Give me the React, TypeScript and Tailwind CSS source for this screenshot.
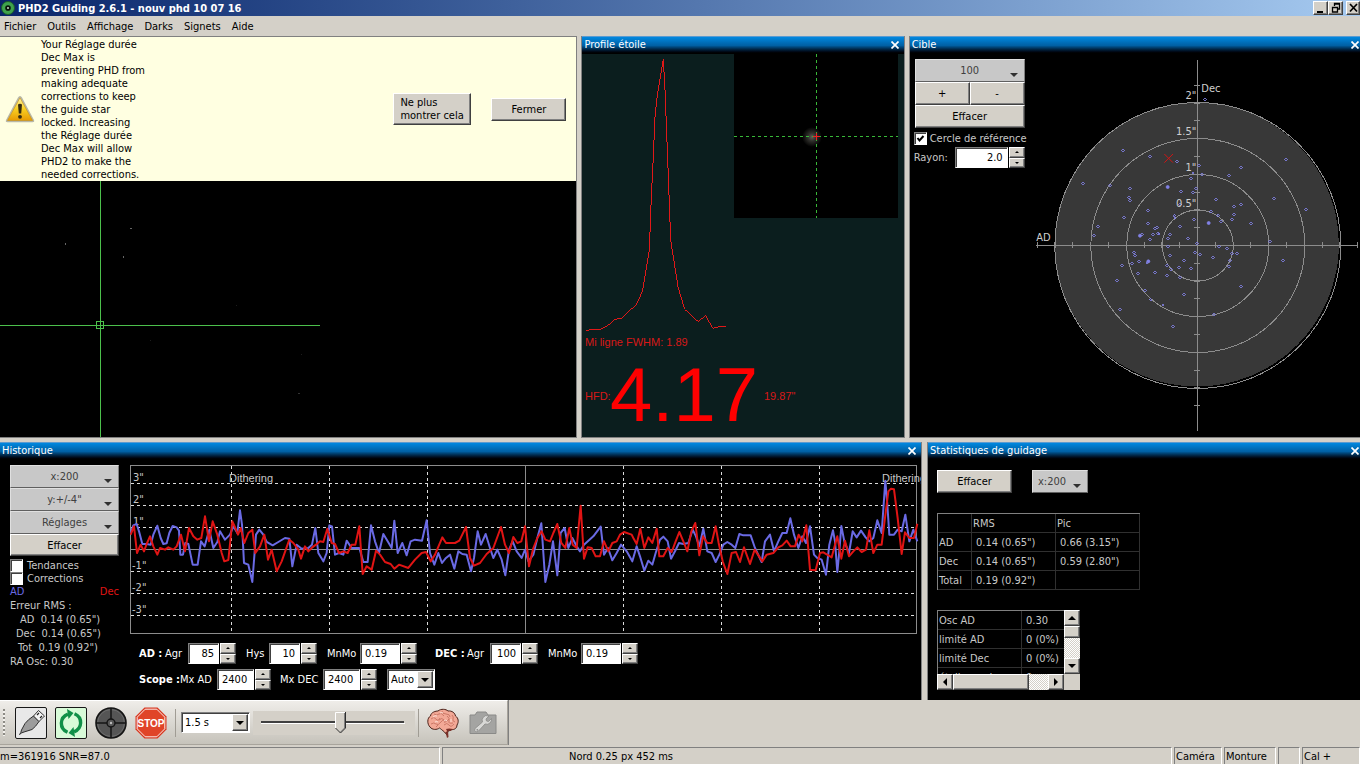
import { useState, type ReactNode } from "react";

const FONT = "font-['DejaVu_Sans_Condensed','Liberation_Sans',sans-serif]";
const RAISED =
  "border border-white border-r-[#404040] border-b-[#404040] bg-[#d4d0c8] shadow-[inset_-1px_-1px_0_#808080] text-black";
const SUNKEN =
  "border border-[#808080] border-r-white border-b-white bg-white shadow-[inset_1px_1px_0_#404040] text-black";

type Point = [number, number];

/** Samples are stored in thirds of a pixel, one list per third of the plot. */
function polyline(parts: [number, Point[]][]) {
  return parts.flatMap(([dx, pts]) => pts.map(([x, y]) => `${x + dx},${y}`)).join(" ");
}

const AD_TRACE = polyline([
  [0, [[392,285],[400,262],[410,258],[417,280],[427,318],[440,318],[452,320],[460,290],[472,263],[482,300],[490,318],[500,316],[508,285],[518,264],[530,268],[537,278],[541,350],[549,350],[556,315],[565,318],[578,380],[593,380],[603,310],[614,325],[628,275],[640,330],[652,312],[660,280],[675,305],[690,290],[700,265],[712,285],[720,217],[726,260],[732,375],[745,380],[757,432],[768,290],[778,275],[790,290],[800,312],[818,322],[835,312],[855,300],[868,302],[877,385],[890,320],[905,332],[925,330],[936,320],[946,270],[955,345],[970,370]]],
  [960, [[20,345],[28,262],[36,265],[45,350],[57,345],[70,350],[80,308],[95,330],[118,330],[130,372],[143,372],[153,262],[165,310],[177,345],[190,288],[203,310],[215,330],[223,248],[233,345],[247,315],[260,352],[272,310],[285,305],[306,308],[320,247],[330,345],[343,380],[355,345],[366,375],[378,360],[390,350],[403,392],[415,340],[427,348],[440,350],[453,400],[462,360],[473,280],[483,320],[497,288],[510,330],[520,360],[532,335],[545,365],[556,412],[567,335],[578,310],[590,340],[605,360],[615,335],[625,370],[640,350],[652,300],[664,256],[676,432],[688,380],[699,310],[712,412],[722,285],[734,270],[745,330],[757,300],[770,325],[780,340],[792,320],[820,295],[842,266],[852,350],[864,330],[877,367],[890,345],[903,320],[920,340],[937,370],[950,325]]],
  [1890, [[30,355],[43,398],[55,368],[67,380],[77,345],[90,305],[100,296],[113,310],[123,362],[135,340],[147,315],[160,318],[175,315],[188,275],[198,295],[208,325],[220,272],[232,340],[245,345],[257,372],[268,350],[280,320],[292,312],[305,320],[316,330],[328,288],[340,292],[362,292],[375,330],[395,372],[405,310],[420,290],[432,340],[445,310],[457,285],[470,285],[481,241],[492,290],[505,330],[517,295],[528,315],[540,265],[552,350],[562,360],[575,365],[588,410],[598,320],[609,277],[615,310],[622,402],[628,340],[634,264],[643,310],[657,345],[668,280],[680,298],[693,278],[707,298],[718,310],[730,300],[742,247],[755,285],[766,128],[772,200],[778,290],[792,290],[803,275],[815,280],[826,230],[838,310],[850,275],[862,310]]],
]);

const DEC_TRACE = polyline([
  [0, [[392,290],[402,265],[411,345],[422,320],[432,340],[440,318],[450,295],[460,325],[472,350],[480,330],[495,335],[505,328],[520,335],[530,325],[543,290],[555,340],[567,270],[580,295],[592,305],[604,300],[615,235],[627,310],[638,250],[652,290],[665,345],[673,370],[685,366],[697,250],[706,270],[714,290],[722,270],[733,315],[745,285],[757,275],[766,345],[780,325],[793,290],[804,365],[815,335],[830,400],[845,370],[868,305],[880,315],[895,335],[903,362],[915,325],[925,340],[937,328],[948,320],[960,310]]],
  [960, [[10,312],[22,272],[35,315],[45,318],[57,345],[70,340],[83,345],[95,320],[106,320],[118,265],[128,408],[140,385],[155,395],[168,338],[180,350],[195,372],[212,378],[223,392],[237,380],[265,390],[285,365],[305,345],[318,342],[332,370],[345,350],[367,298],[378,315],[405,315],[418,308],[438,267],[450,360],[462,383],[480,375],[500,348],[520,330],[543,267],[555,320],[567,345],[580,297],[592,315],[604,310],[615,265],[627,385],[640,330],[652,300],[665,280],[676,305],[690,310],[700,285],[712,258],[724,315],[736,330],[748,270],[758,320],[770,330],[782,203],[792,362],[803,328],[815,330],[827,355],[840,355],[852,310],[865,340],[877,315],[890,310],[900,290],[912,282],[935,290]]],
  [1890, [[10,300],[20,318],[31,272],[43,330],[55,298],[67,315],[80,272],[88,355],[100,355],[113,330],[125,342],[137,310],[148,282],[160,310],[172,340],[184,280],[196,255],[208,352],[219,295],[232,315],[245,315],[257,265],[266,315],[278,370],[292,408],[305,345],[318,342],[330,372],[342,328],[360,378],[374,335],[397,370],[410,350],[430,345],[445,328],[457,322],[470,308],[482,325],[495,325],[506,290],[517,310],[529,262],[540,395],[557,397],[570,345],[580,343],[605,358],[622,295],[634,362],[645,308],[657,355],[670,340],[682,328],[695,342],[708,335],[718,277],[730,345],[742,320],[755,320],[775,160],[783,152],[792,154],[803,240],[815,348],[825,283],[838,300],[852,300],[862,257]]],
]);

const SCATTER: Point[] = [[898,298],[652,451],[733,469],[814,484],[1141,478],[1006,502],[880,496],[970,526],[862,518],[889,523],[856,535],[532,550],[613,556],[673,565],[871,565],[862,576],[826,574],[670,592],[673,601],[931,598],[1105,595],[823,612],[1006,613],[985,619],[1201,628],[727,631],[916,634],[655,652],[985,643],[937,646],[806,646],[808,653],[865,658],[979,657],[946,664],[577,679],[565,706],[727,670],[709,703],[742,703],[733,718],[748,685],[754,682],[757,699],[760,701],[793,703],[787,715],[787,739],[823,679],[847,715],[1036,670],[874,730],[940,739],[964,745],[979,760],[994,760],[1093,724],[1132,781],[922,772],[883,763],[868,757],[793,766],[685,757],[688,765],[700,784],[725,787],[679,790],[649,796],[697,820],[748,817],[784,796],[784,826],[796,808],[820,802],[835,781],[856,805],[823,832],[634,841],[718,871],[735,898],[643,928],[772,914],[802,979],[835,883],[925,943],[1006,859],[970,799],[973,781]];
const CLUSTERS: Point[] = [[787,561],[704,707],[910,669],[729,784]];

function Caret({ className }: { className: string }) {
  return (
    <svg viewBox="0 0 8 4" className={className} aria-hidden="true">
      <path d="M0 0h8L4 4z" fill="currentColor" />
    </svg>
  );
}

function FlatSelect({ label, value, className, padding = "pr-0" }: { label: string; value: string; className: string; padding?: string }) {
  return (
    <div className={`relative ${className}`}>
      <select
        aria-label={label}
        defaultValue={value}
        className={`h-full w-full appearance-none border border-[#e0e0e0] border-r-[#808080] border-b-[#606060] bg-[#c8c8c8] text-[#404040] [text-align-last:center] ${padding}`}
      >
        <option>{value}</option>
      </select>
      <Caret className="pointer-events-none absolute right-[7px] bottom-[5px] h-1 w-2 text-[#303030]" />
    </div>
  );
}

function WinSelect({ label, value, className }: { label: string; value: string; className: string }) {
  return (
    <div className={`relative ${className}`}>
      <select aria-label={label} defaultValue={value} className={`h-full w-full appearance-none pl-[3px] ${SUNKEN}`}>
        <option>{value}</option>
      </select>
      <span className={`pointer-events-none absolute top-0.5 right-0.5 bottom-0.5 flex w-4 items-center justify-center ${RAISED}`}>
        <Caret className="h-1 w-2" />
      </span>
    </div>
  );
}

function Spin({ id, value, width, align = "text-right" }: { id: string; value: string; width: string; align?: string }) {
  return (
    <span className="flex h-[21px] gap-px">
      <input id={id} defaultValue={value} className={`h-full px-1 ${align} ${width} ${SUNKEN}`} />
      <span className="flex w-4 flex-col">
        <button aria-label="Augmenter" className={`flex flex-1 items-center justify-center ${RAISED}`}>
          <Caret className="h-0.5 w-1 rotate-180" />
        </button>
        <button aria-label="Diminuer" className={`flex flex-1 items-center justify-center ${RAISED}`}>
          <Caret className="h-0.5 w-1" />
        </button>
      </span>
    </span>
  );
}

function Check({ id, label, checked = false, className = "" }: { id: string; label: string; checked?: boolean; className?: string }) {
  return (
    <label htmlFor={id} className={`flex h-[13px] items-center whitespace-nowrap ${className}`}>
      <span className="relative flex size-[13px] shrink-0">
        <input id={id} type="checkbox" defaultChecked={checked} className={`peer size-[13px] appearance-none ${SUNKEN}`} />
        <svg viewBox="0 0 13 13" className="pointer-events-none absolute inset-0 hidden size-[13px] peer-checked:block" aria-hidden="true">
          <path d="M3.5 6L5.5 8.5L9.5 4" fill="none" stroke="#000" strokeWidth="2" />
        </svg>
      </span>
      {label}
    </label>
  );
}

function Panel({ title, className, inset = "pr-[5px]", children }: { title: string; className: string; inset?: string; children: ReactNode }) {
  return (
    <section className={`flex min-w-0 flex-col overflow-hidden ${className}`}>
      <header className={`flex h-[18px] shrink-0 items-center justify-between border-t border-[#5a9ad0] bg-linear-to-b from-[#0088e0] via-[#0060a4] to-black pb-0.5 pl-0.5 text-white ${inset}`}>
        <h2>{title}</h2>
        <button aria-label={`Fermer ${title}`} className="flex h-3 w-2 items-center justify-center">
          <svg viewBox="0 0 8 8" className="size-2" aria-hidden="true">
            <path d="M.5 .5l7 7m0-7l-7 7" stroke="#fff" strokeWidth="1.700" />
          </svg>
        </button>
      </header>
      {children}
    </section>
  );
}

function Notification() {
  return (
    <div className="flex h-36 shrink-0 items-center bg-[#ffffe1] text-black">
      <svg viewBox="0 0 30 28" className="ml-[5px] h-7 w-[30px] shrink-0" aria-label="Attention">
        <defs>
          <linearGradient id="warn" x1="0" y1="0" x2="0" y2="1">
            <stop offset="0" stopColor="#fff3a0" />
            <stop offset="0.5" stopColor="#f8cf22" />
            <stop offset="1" stopColor="#e79a04" />
          </linearGradient>
        </defs>
        <path d="M15 1Q16.2 1 17 2.5L29 25Q29.8 27.2 27.5 27.2H2.5Q.2 27.2 1 25L13 2.5Q13.800 1 15 1z" fill="#b8b8a8" />
        <path d="M15 2.800L27.5 25.500H2.5z" fill="url(#warn)" stroke="#c79010" strokeWidth=".6" strokeLinejoin="round" />
        <path d="M13 9.500q2-1.500 4 0l-.8 9h-2.400z" fill="#352c10" />
        <circle cx="15" cy="21.800" r="1.900" fill="#352c10" />
      </svg>
      <p className="ml-1.5 w-[108px] leading-[13px]">
        Your Réglage durée<br />Dec Max is<br />preventing PHD from<br />making adequate<br />corrections to keep<br />the guide star<br />locked. Increasing<br />the Réglage durée<br />Dec Max will allow<br />PHD2 to make the<br />needed corrections.
      </p>
      <button className={`ml-auto h-8 w-[78px] pl-1.5 text-left leading-[13px] ${RAISED}`}>Ne plus<br />montrer cela</button>
      <button className={`mr-2.5 ml-5 h-[23px] w-[75px] ${RAISED}`}>Fermer</button>
    </div>
  );
}

function GuideImage() {
  return (
    <svg viewBox="0 181 576 256" preserveAspectRatio="xMinYMin meet" className="h-64 w-full bg-black" shapeRendering="crispEdges">
      <g fill="#4cc04c">
        <path d="M100 181h1v256h-1zM0 325h320v1H0z" />
        <path d="M96 321h8v8h-8zM97 322v6h6v-6z" fillRule="evenodd" />
      </g>
      <g fill="#666">
        <path d="M130 228h2v1h-2zM65 243h1v2h-1zM123 256h1v2h-1z" />
        <path d="M298 393h2v1h-2z" fill="#333" />
        <path d="M150 340h1v1h-1zM236 305h1v1h-1zM301 354h1v1h-1z" fill="#1c1c1c" />
      </g>
    </svg>
  );
}

function StarProfile() {
  return (
    <svg viewBox="583 54 321 383" preserveAspectRatio="xMinYMin meet" className="h-[383px] w-full bg-[#0b1e1e]" fontFamily="Liberation Sans, Arial, sans-serif" fill="#d81818">
      <defs>
        <radialGradient id="star">
          <stop offset="0" stopColor="#606058" />
          <stop offset="0.4" stopColor="#30302c" />
          <stop offset="1" stopColor="#000" />
        </radialGradient>
      </defs>
      <path d="M735 54h164v164H735z" fill="#000" />
      <circle cx="813" cy="137" r="10" fill="url(#star)" />
      <g shapeRendering="crispEdges" fill="none">
        <path d="M817.500 54V218M735 136.500H899" stroke="#38b838" strokeDasharray="3 3" />
        <path d="M814 136.500h7M817.500 133v7" stroke="#f02020" />
        <polyline
          transform="translate(580 30) scale(.33333)"
          stroke="#e01818"
          strokeWidth="3"
          points="22,902 40,898 65,898 85,888 107,869 128,864 150,842 170,827 190,785 211,660 217,500 222,400 228,260 235,195 253,88 258,180 268,440 275,630 297,770 317,838 338,857 358,875 380,856 401,895 418,891 440,891"
        />
      </g>
      <text x="586" y="346" fontSize="11">Mi ligne FWHM: 1.89</text>
      <text x="586" y="400" fontSize="11">HFD:</text>
      <text x="611" y="421" fontSize="76" fill="#f00">4.17</text>
      <text x="765" y="400" fontSize="11">19.87"</text>
    </svg>
  );
}

const TARGET_TICKS = [-9, -8, -7, -6, -5, -4, -3, -2, -1, 1, 2, 3, 4, 5, 6, 7, 8, 9];

function TargetPlot() {
  return (
    <svg viewBox="1030 54 330 383" preserveAspectRatio="xMaxYMin meet" className="h-[383px] min-w-0 flex-1">
      <g shapeRendering="crispEdges" fill="none" stroke="#8c8c8c">
        <circle cx="1196.500" cy="244.500" r="142" fill="#383838" stroke="none" />
        <circle cx="1197.500" cy="245.500" r="35.500" />
        <circle cx="1197.500" cy="245.500" r="71" />
        <circle cx="1197.500" cy="245.500" r="107" />
        <circle cx="1197.500" cy="245.500" r="143" />
        <path d="M1036 245.500H1358M1197.500 60V431" />
        {TARGET_TICKS.map((n) => (
          <path key={n} d={`M${1197.5 + Math.round(n * 17.8)} 242v6M1194 ${245.5 + Math.round(n * 17.8)}h6`} />
        ))}
      </g>
      <g transform="translate(905 0) scale(.33333)" fill="none" stroke="#8282e6" strokeWidth="2.500">
        {SCATTER.map(([x, y]) => (
          <path key={`${x}-${y}`} d={`M${x - 3} ${y + 1}l4 -4l4 4l-4 4z`} shapeRendering="crispEdges" />
        ))}
        {CLUSTERS.map(([x, y]) => (
          <circle key={`${x}-${y}`} cx={x} cy={y} r="4.500" fill="#8282e6" />
        ))}
        <path d="M777 462l26 26m0-26l-26 26" stroke="#d01414" strokeWidth="3" />
      </g>
      <g fontSize="11" fill="#cfcfcf">
        <text x="1036" y="241">AD</text>
        <text x="1201" y="92">Dec</text>
        <g textAnchor="end">
          <text x="1196" y="99">2"</text>
          <text x="1196" y="135">1.5"</text>
          <text x="1196" y="171">1"</text>
          <text x="1196" y="207">0.5"</text>
        </g>
      </g>
    </svg>
  );
}

function HistoryPlot() {
  return (
    <svg viewBox="130 460 791 178" preserveAspectRatio="xMinYMin meet" className="h-[178px] w-full">
      <g shapeRendering="crispEdges" fill="none">
        <path d="M130.500 465.500H916.500V633.500H130.500z" stroke="#8c8c8c" />
        <path
          d="M131 483.500H916M131 505.500H916M131 527.500H916M131 571.500H916M131 593.500H916M131 615.500H916M231.500 466V631M329.500 466V631M427.500 466V631M623.500 466V631M721.500 466V631M819.500 466V631"
          stroke="#dcdcdc"
          strokeDasharray="3 3"
        />
        <path d="M131 549.500H916M525.500 466V633" stroke="#8c8c8c" />
      </g>
      <g fontSize="11" fill="#c8c8c8">
        {["3", "2", "1"].map((n, i) => (
          <text key={n} x="133" y={481 + i * 22}>{n}"</text>
        ))}
        {["-1", "-2", "-3"].map((n, i) => (
          <text key={n} x="132" y={569 + i * 22}>{n}"</text>
        ))}
        <text x="229" y="482" fontFamily="Liberation Sans, sans-serif">Dithering</text>
        <text x="882" y="482" fontFamily="Liberation Sans, sans-serif">Dithering</text>
      </g>
      <g transform="translate(0 438) scale(.33333)" fill="none" strokeWidth="6" strokeLinejoin="round">
        <polyline points={AD_TRACE} stroke="#6a6ae4" />
        <polyline points={DEC_TRACE} stroke="#e01414" />
      </g>
    </svg>
  );
}

function HistoryPanel() {
  return (
    <Panel title="Historique" className="border-r border-[#808080] bg-black">
      <div className="flex flex-1">
        <div className="flex w-[130px] shrink-0 flex-col pt-[5px] pr-[11px] pl-2.5 text-[#c8c8c8]">
          <FlatSelect label="Échelle x" value="x:200" className="h-[23px]" />
          <FlatSelect label="Échelle y" value={'y:+/-4"'} className="h-[23px]" />
          <FlatSelect label="Réglages" value="Réglages" className="h-[23px]" />
          <button className={`h-[22px] shrink-0 ${RAISED}`}>Effacer</button>
          <Check id="trend" label="Tendances" className="mt-[3px] gap-1" />
          <Check id="corr" label="Corrections" className="gap-1" />
          <div className="flex h-[13px] items-center justify-between">
            <span className="text-[#6a6ae4]">AD</span>
            <span className="text-[#e01414]">Dec</span>
          </div>
          <div className="pt-px leading-[14px] whitespace-nowrap">
            <p>Erreur RMS :</p>
            <p className="pl-2.5">AD&nbsp; 0.14 (0.65")</p>
            <p className="pl-1.5">Dec&nbsp; 0.14 (0.65")</p>
            <p className="pl-2">Tot&nbsp; 0.19 (0.92")</p>
            <p>RA Osc: 0.30</p>
          </div>
        </div>
        <div className="min-w-0 flex-1">
          <HistoryPlot />
          <div className="flex flex-col gap-[5px] pt-[5px] pl-[9px] whitespace-nowrap text-white">
            <div className="flex items-center">
              <b className="w-[26px]">AD :</b>
              <label htmlFor="adAgr" className="w-[23px]">Agr</label>
              <Spin id="adAgr" value="85" width="w-[31px]" />
              <label htmlFor="hys" className="ml-2.5 w-[23px]">Hys</label>
              <Spin id="hys" value="10" width="w-[31px]" />
              <label htmlFor="adMin" className="ml-2.5 w-[33px]">MnMo</label>
              <Spin id="adMin" value="0.19" width="w-10" align="text-left" />
              <b className="ml-[18px] w-8">DEC :</b>
              <label htmlFor="decAgr" className="w-[23px]">Agr</label>
              <Spin id="decAgr" value="100" width="w-[31px]" />
              <label htmlFor="decMin" className="ml-2.5 w-[33px]">MnMo</label>
              <Spin id="decMin" value="0.19" width="w-10" align="text-left" />
            </div>
            <div className="flex items-center">
              <b className="w-[41px]">Scope :</b>
              <label htmlFor="mxAd" className="w-[37px]">Mx AD</label>
              <Spin id="mxAd" value="2400" width="w-[37px]" align="text-left" />
              <label htmlFor="mxDec" className="ml-[9px] w-[43px]">Mx DEC</label>
              <Spin id="mxDec" value="2400" width="w-[37px]" align="text-left" />
              <WinSelect label="Mode Dec" value="Auto" className="ml-2.5 h-[21px] w-12" />
            </div>
          </div>
        </div>
      </div>
    </Panel>
  );
}

const CELL = "h-[19px] border-r border-b border-[#303030] py-0 font-normal text-left whitespace-nowrap";

function ScrollButton({ label, turn, className }: { label: string; turn: string; className: string }) {
  return (
    <button aria-label={label} className={`flex size-4 shrink-0 items-center justify-center ${RAISED} ${className}`}>
      <Caret className={`h-1 w-2 ${turn}`} />
    </button>
  );
}

const TRACK = "bg-[repeating-conic-gradient(#d4d0c8_0_25%,#ffffff_0_50%)] bg-[length:2px_2px]";

function StatsPanel() {
  return (
    <Panel title="Statistiques de guidage" inset="pr-px" className="border-l border-[#808080] bg-black text-[#c8c8c8]">
      <div className="flex flex-col items-start pt-2.5 pl-[9px]">
        <div className="flex gap-5">
          <button className={`h-[23px] w-[75px] ${RAISED}`}>Effacer</button>
          <FlatSelect label="Échelle" value="x:200" className="h-[23px] w-[56px]" padding="pr-4" />
        </div>
        <table className="mt-5 table-fixed border-separate border-spacing-0 border-t border-l border-[#808080]">
          <colgroup>
            <col className="w-[34px]" />
            <col className="w-[84px]" />
            <col className="w-[84px]" />
          </colgroup>
          <thead>
            <tr>
              <th className={`${CELL} px-px`} aria-label="Axe" />
              <th className={`${CELL} px-px`}>RMS</th>
              <th className={`${CELL} px-px`}>Pic</th>
            </tr>
          </thead>
          <tbody>
            {[["AD", '0.14 (0.65")', '0.66 (3.15")'], ["Dec", '0.14 (0.65")', '0.59 (2.80")'], ["Total", '0.19 (0.92")', ""]].map(([axis, rms, peak]) => (
              <tr key={axis}>
                <th className={`${CELL} px-px`}>{axis}</th>
                <td className={`${CELL} px-1`}>{rms}</td>
                <td className={`${CELL} px-1`}>{peak}</td>
              </tr>
            ))}
          </tbody>
        </table>
        <div className="mt-5 grid h-20 w-[143px] grid-cols-[1fr_16px] grid-rows-[1fr_16px] bg-[#d4d0c8]">
          <div className="h-16 overflow-hidden bg-black">
            <table className="w-[170px] table-fixed border-separate border-spacing-0 border-t border-l border-[#808080]">
              <colgroup>
                <col className="w-[84px]" />
                <col />
              </colgroup>
              <tbody>
                {[["Osc AD", "0.30"], ["limité AD", "0 (0%)"], ["limité Dec", "0 (0%)"], ["étoile perdue", "0"]].map(([name, value]) => (
                  <tr key={name}>
                    <th className={`${CELL} px-px`}>{name}</th>
                    <td className={`${CELL} px-1`}>{value}</td>
                  </tr>
                ))}
              </tbody>
            </table>
          </div>
          <div className={`flex flex-col ${TRACK}`}>
            <ScrollButton label="Haut" turn="rotate-180" className="" />
            <span className={`h-3 ${RAISED}`} />
            <ScrollButton label="Bas" turn="" className="mt-auto" />
          </div>
          <div className={`flex ${TRACK}`}>
            <ScrollButton label="Gauche" turn="rotate-90" className="" />
            <span className={`w-[76px] ${RAISED}`} />
            <ScrollButton label="Droite" turn="-rotate-90" className="ml-auto" />
          </div>
        </div>
      </div>
    </Panel>
  );
}

function GammaSlider() {
  const [gamma, setGamma] = useState(55);
  return (
    <div className="relative ml-[3px] h-6 w-[162px] bg-[#d4d0c8]">
      <svg viewBox="0 0 162 24" className="h-6 w-[162px]" aria-hidden="true">
        <g shapeRendering="crispEdges">
          <path d="M8 10h143v2H8z" fill="#404040" />
          <path d="M8 12h144v1H8z" fill="#fff" />
        </g>
        <g transform={`translate(${Math.round(8 + gamma * 1.34)} 1)`}>
          <path d="M.5 .5h10v15.500l-5 5-5-5z" fill="#d4d0c8" />
          <path d="M.5 16V.5h9.500" fill="none" stroke="#fff" />
          <path d="M9.500 1v15l-4 4" fill="none" stroke="#808080" />
          <path d="M10.500 0v16l-5 5-5-5" fill="none" stroke="#303030" />
        </g>
      </svg>
      <input
        type="range"
        aria-label="Gamma"
        min="0"
        max="100"
        value={gamma}
        onChange={(e) => setGamma(Number(e.target.value))}
        className="absolute inset-x-2 inset-y-0 opacity-0"
      />
    </div>
  );
}

function Toolbar() {
  return (
    <div className="flex">
      <div className="flex h-[45px] w-[508px] items-center border-t border-r border-white border-r-[#a8a49c] border-b border-b-[#a8a49c] bg-linear-to-b from-[#efede9] to-[#c6c3bb] shadow-[1px_0_0_#808080]">
        <span className="ml-[3px] h-[27px] w-0.5 bg-[repeating-linear-gradient(#8c8a84_0_2px,#f4f2ee_2px_4px)]" />
        <div className="ml-2.5 flex gap-2">
          <button aria-label="Connecter" className="size-8">
            <svg viewBox="0 0 32 32" className="size-8">
              <rect x=".5" y=".5" width="31" height="31" rx="1.500" fill="#e8e8e8" stroke="#181818" />
              <path d="M4.500 27.500q1.500-1.500 2-4.500L10 16.500q3-4 8.500-7.500l5.500 5.500q-3.500 5.500-7 8L9 25q-2.500.5-4.500 2.500z" fill="#9c9c9c" stroke="#303030" strokeWidth="1" />
              <path d="M18.500 9l5-5.500 6 5.500-5.500 5.500z" fill="#f4f4f4" stroke="#303030" strokeWidth="1" />
              <path d="M22 8l2-2M25 11l2-2" stroke="#202020" strokeWidth="1.200" />
            </svg>
          </button>
          <button aria-label="Boucler" className="size-8">
            <svg viewBox="0 0 32 32" className="size-8">
              <rect x=".5" y=".5" width="31" height="31" rx="1.500" fill="#d8fbd8" stroke="#181818" />
              <g fill="none" stroke="#109048" strokeWidth="3.400">
                <path d="M12.500 25.300C4 21.500 4.500 10.500 13 7.200" />
                <path d="M19.500 6.700C28 10.500 27.500 21.500 19 24.800" />
              </g>
              <path d="M12 2L18.500 6L13.500 12zM20 30L13.500 26L18.500 20z" fill="#109048" />
            </svg>
          </button>
          <button aria-label="Guider" className="size-8">
            <svg viewBox="0 0 32 32" className="size-8">
              <circle cx="16" cy="16" r="15" fill="#555" stroke="#141414" strokeWidth="1.600" />
              <circle cx="16" cy="16" r="13.400" fill="none" stroke="#707070" strokeWidth=".8" />
              <path d="M16 1v30M1 16h30" stroke="#141414" strokeWidth="1.500" />
              <circle cx="16" cy="16" r="4" fill="#555" stroke="#141414" strokeWidth="1.400" />
              <circle cx="16" cy="16" r="1.200" fill="#bbb" />
            </svg>
          </button>
          <button aria-label="Arrêter" className="size-8">
            <svg viewBox="0 0 32 32" className="size-8">
              <path d="M9.500 .5h13l9 9v13l-9 9h-13l-9-9v-13z" fill="#d83820" />
              <path d="M10.200 2.200h11.600l8 8v11.600l-8 8H10.200l-8-8V10.200z" fill="#e04428" stroke="#fff" strokeWidth=".9" />
              <text x="16" y="19.500" textAnchor="middle" fontSize="10" fontWeight="bold" fontFamily="Liberation Sans, sans-serif" fill="#fff">STOP</text>
            </svg>
          </button>
        </div>
        <span className="ml-2 h-7 w-px bg-[#a09c94]" />
        <WinSelect label="Durée d'exposition" value="1.5 s" className="ml-[5px] h-[21px] w-[69px]" />
        <GammaSlider />
        <span className="ml-[3px] h-7 w-px bg-[#a09c94]" />
        <button aria-label="Réglages avancés" className="ml-2 size-8">
          <svg viewBox="0 0 32 32" className="size-8">
            <path d="M3 20C0 17 0 11 3.500 9C4 5 9 4 11 4C14 1.500 19 2 21 4C25 3.500 28 6 28.500 9C31.500 11 32 15 30 18C30 21 27.500 23 24.500 22.500L21 24L20 28L17.500 25C15 23 14 22 12.500 21C10 23 5 23 3 20z" fill="#f2a896" stroke="#4a2018" strokeWidth="1" />
            <path d="M4 12q3-3 5 0t4-1M7 7q3 2 5 0t5 2M15 4q0 3 4 3t4 3M4 17q3-2 5 0t5-2 4 1M12 13q3-3 5 0t5-1M20 9q3 2 2 5t4 2M25 8q2 2 1 4t2 3M17 18q3-3 5 0t5-1M9 20l2-2" fill="none" stroke="#c06c5c" strokeWidth=".8" />
            <path d="M6 10q2-2 4-1M13 6q2-1 3 0M17 14q2-2 3 0M8 15q2-1 3 0M24 12v3" stroke="#fde0d6" strokeWidth="1" fill="none" />
            <path d="M20 24q4 1 6-2q-4-1-7 0zM18.500 25l1.500 6 1.500-1-.5-6z" fill="#7a3028" />
          </svg>
        </button>
        <button aria-label="Réglages caméra" className="ml-2.5 h-6 w-7">
          <svg viewBox="0 0 28 24" className="h-6 w-7">
            <path d="M1 4h5l2-3h9l2 3h8v18.500H1z" fill="#a4a4a2" stroke="#8a8a88" />
            <path d="M22.500 7.500l-3 3-2-.5-.5-2 3-3q-4-1.500-6 1.500-1.500 2-.5 4.500l-7.500 6.500q-1 2 .5 3 1.500 1 3-.5l6.500-7q3 1 5-1 2-2 1.500-4.500z" fill="#d8d8d6" stroke="#8a8a88" strokeWidth=".8" />
            <circle cx="8.300" cy="18.800" r=".9" fill="#8a8a88" />
          </svg>
        </button>
      </div>
    </div>
  );
}

const STATUS = "border border-[#808080] border-r-white border-b-0 pt-px whitespace-pre leading-[16px]";

export default function App() {
  return (
    <div className={`flex min-h-screen flex-col bg-[#d4d0c8] text-[11px] leading-[13px] text-black ${FONT}`}>
      <header className="flex h-4 shrink-0 items-center bg-linear-to-r from-[#0a246a] to-[#a6caf0] text-white">
        <svg viewBox="0 0 14 14" className="ml-px size-3.5" aria-hidden="true">
          <circle cx="7" cy="7" r="6.500" fill="#3fa34d" stroke="#1c5c2a" />
          <circle cx="7" cy="7" r="2.800" fill="#08130a" />
          <circle cx="7" cy="7" r=".9" fill="#d8f0d8" />
        </svg>
        <h1 className="ml-[3px] font-bold">PHD2 Guiding 2.6.1 - nouv phd 10 07 16</h1>
        <div className="ml-auto flex">
          <button aria-label="Réduire" className={`h-3.5 w-[15px] ${RAISED}`}>
            <svg viewBox="0 0 13 12" className="h-3 w-[13px]"><path d="M3 9h6v2H3z" /></svg>
          </button>
          <button aria-label="Restaurer" className={`h-3.5 w-[15px] ${RAISED}`}>
            <svg viewBox="0 0 13 12" className="h-3 w-[13px]"><path d="M5.500 4V1.500h5V7H8M5 2h6M3.500 5.500h5v4.500h-5zM3 5.500h6" fill="none" stroke="#000" strokeWidth="1.300" /></svg>
          </button>
          <button aria-label="Quitter" className={`ml-[3px] h-3.5 w-3.5 ${RAISED}`}>
            <svg viewBox="0 0 12 12" className="size-3"><path d="M3 2l7 7.500m0-7.500l-7 7.500" stroke="#000" strokeWidth="1.700" /></svg>
          </button>
        </div>
      </header>
      <nav className="flex h-5 shrink-0 items-center gap-[11px] pl-1">
        {["Fichier", "Outils", "Affichage", "Darks", "Signets", "Aide"].map((item) => (
          <button key={item}>{item}</button>
        ))}
      </nav>
      <main className="flex flex-1 flex-col gap-1">
        <div className="grid grid-cols-[577fr_323fr_451fr] gap-1">
          <section className="flex min-w-0 flex-col border-t border-r border-b border-[#808080] bg-black">
            <Notification />
            <GuideImage />
          </section>
          <Panel title="Profile étoile" className="border-x border-b border-[#808080] bg-[#0b1e1e]">
            <StarProfile />
          </Panel>
          <Panel title="Cible" inset="pr-px" className="border-b border-l border-[#808080] bg-black">
            <div className="flex text-[#c8c8c8]">
              <div className="w-[120px] shrink-0 pt-[5px] pl-1">
                <div className="w-[111px] pl-px">
                  <FlatSelect label="Nombre de points" value="100" className="h-[23px]" />
                  <div className="flex">
                    <button className={`h-[23px] flex-1 ${RAISED}`}>+</button>
                    <button className={`h-[23px] flex-1 ${RAISED}`}>-</button>
                  </div>
                  <button className={`h-[23px] w-full ${RAISED}`}>Effacer</button>
                </div>
                <Check id="ref" label="Cercle de référence" checked className="mt-1 gap-[3px]" />
                <div className="mt-0.5 flex items-center">
                  <label htmlFor="radius" className="w-[41px]">Rayon:</label>
                  <Spin id="radius" value="2.0" width="w-[53px]" />
                </div>
              </div>
              <TargetPlot />
            </div>
          </Panel>
        </div>
        <div className="grid min-h-[258px] flex-1 grid-cols-[922fr_433fr] gap-[5px]">
          <HistoryPanel />
          <StatsPanel />
        </div>
      </main>
      <Toolbar />
      <footer className="mt-0.5 flex h-[17px] shrink-0 gap-0.5">
        <div className={`w-[440px] ${STATUS} border-l-0`}>m=361916 SNR=87.0</div>
        <div className={`flex-1 pl-[126px] ${STATUS}`}>Nord 0.25 px 452 ms</div>
        <div className={`w-12 pl-px ${STATUS}`}>Caméra</div>
        <div className={`w-[52px] pl-px ${STATUS}`}>Monture</div>
        <div className={`w-[22px] ${STATUS}`} />
        <div className={`w-[58px] pl-px ${STATUS}`}>Cal +</div>
      </footer>
    </div>
  );
}
